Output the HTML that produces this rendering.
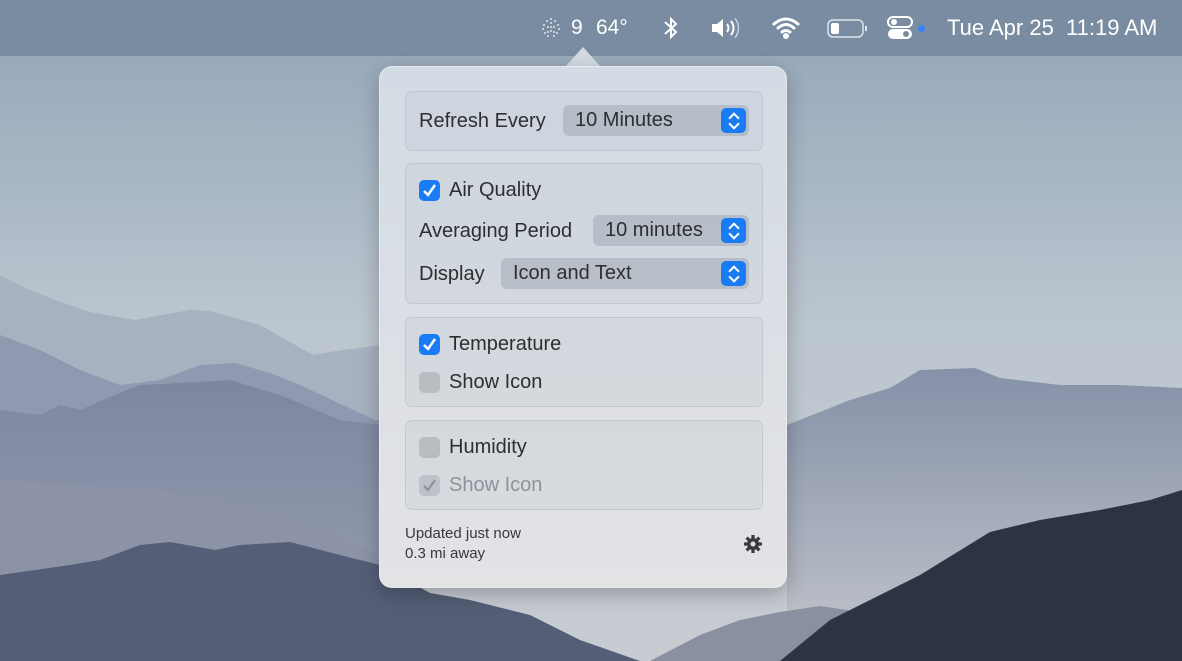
<!DOCTYPE html>
<html><head><meta charset="utf-8"><style>
*{margin:0;padding:0;box-sizing:border-box}
body{width:1182px;height:661px;overflow:hidden;position:relative;font-family:"Liberation Sans",sans-serif;background:#a9b6c4}
#bg{position:absolute;left:0;top:0}
#menubar{position:absolute;left:0;top:0;width:1182px;height:56px;background:#798ca1;color:#fff;font-size:21px}
#menubar span{position:absolute;top:16px}
#pop{position:absolute;left:379px;top:66px;width:408px;height:522px;border-radius:13px;background:linear-gradient(#d3dbe4,#e3e3e6);box-shadow:0 6px 20px rgba(0,0,0,.25);border:1px solid rgba(255,255,255,.4)}
#arrow{position:absolute;left:565px;top:47px;width:0;height:0;border-left:18px solid transparent;border-right:18px solid transparent;border-bottom:20px solid #d3dbe4}
.box{position:absolute;left:25px;width:358px;background:rgba(180,190,200,.22);border:1px solid rgba(170,178,188,.45);border-radius:7px}
.t{position:absolute;font-size:20px;color:#2e2e30}
.sel{position:absolute;height:31px;border-radius:6px;background:rgba(150,160,172,.45);font-size:20px;color:#2e2e30;padding:4px 0 0 12px}
.sel i{position:absolute;right:3px;top:3px;width:25px;height:25px;border-radius:5px;background:#1a7cf5}
.sel i:before,.sel i:after{content:"";position:absolute;left:9px;width:6px;height:6px;border:solid #fff;border-width:2px 0 0 2px}
.sel i:before{top:6px;transform:rotate(45deg)}
.sel i:after{top:12px;transform:rotate(225deg)}
.cb{position:absolute;width:21px;height:21px;border-radius:5px;background:#1a7cf5}
.cb.off{background:rgba(160,165,172,.55)}
.cb.dis{background:rgba(160,165,172,.45)}
.cb svg{position:absolute;left:2px;top:2px}
</style></head><body>
<svg id="bg" width="1182" height="661" viewBox="0 0 1182 661">
<defs>
<linearGradient id="sky" x1="0" y1="0" x2="0" y2="1"><stop offset="0" stop-color="#92a4b7"/><stop offset=".5" stop-color="#bcc6cf"/><stop offset="1" stop-color="#c8ccd2"/></linearGradient>
<linearGradient id="rh" x1="0" y1="0" x2="0" y2="1"><stop offset="0" stop-color="#8591a8"/><stop offset="1" stop-color="#c3c6cc"/></linearGradient>
<linearGradient id="lh" x1="0" y1="0" x2="0" y2="1"><stop offset="0" stop-color="#7c87a0"/><stop offset="1" stop-color="#9aa0b0"/></linearGradient>
</defs>
<rect width="1182" height="661" fill="url(#sky)"/>
<path d="M0 275 L30 290 L55 300 L90 312 L135 320 L190 310 L210 311 L260 325 L313 355 L330 352 L380 345 L380 661 L0 661Z" fill="#a8b1c0"/>
<path d="M0 335 L40 350 L80 370 L120 385 L160 380 L200 365 L235 363 L270 373 L300 385 L375 420 L380 420 L380 661 L0 661Z" fill="#8f9ab0"/>
<path d="M0 410 L40 415 L60 405 L80 410 L115 395 L140 385 L180 383 L230 380 L280 395 L340 420 L380 425 L380 661 L0 661Z" fill="url(#lh)"/>
<path d="M0 480 L150 490 L200 495 L300 520 L380 555 L380 661 L0 661Z" fill="#8c93a6"/>
<path d="M0 575 L70 565 L100 560 L140 545 L170 542 L215 550 L240 545 L290 542 L340 555 L380 565 L430 593 L470 600 L530 615 L580 640 L640 661 L0 661Z" fill="#545e76"/>
<path d="M787 425 L850 400 L890 388 L920 370 L975 368 L1000 378 L1060 385 L1120 385 L1182 388 L1182 661 L787 661Z" fill="url(#rh)"/>
<path d="M650 661 L700 635 L740 620 L780 612 L820 606 L860 612 L900 630 L900 661Z" fill="#8a90a0"/>
<path d="M780 661 L830 620 L870 600 L920 575 L990 532 L1040 520 L1100 510 L1150 500 L1182 490 L1182 661Z" fill="#2c3444"/>
</svg>
<div id="menubar">
<svg style="position:absolute;left:540px;top:17px" width="22" height="22" viewBox="0 0 22 22" fill="#dfe5ec"><g>
<circle cx="11" cy="2" r="1"/><circle cx="7" cy="4" r="1"/><circle cx="15" cy="4" r="1"/><circle cx="4" cy="8" r="1"/><circle cx="18" cy="8" r="1"/><circle cx="3" cy="12" r="1"/><circle cx="19" cy="12" r="1"/><circle cx="5" cy="16" r="1"/><circle cx="17" cy="16" r="1"/><circle cx="8" cy="19" r="1"/><circle cx="14" cy="19" r="1"/><circle cx="11" cy="6" r="1"/><circle cx="8" cy="10" r="1"/><circle cx="14" cy="10" r="1"/><circle cx="11" cy="14" r="1"/><circle cx="8" cy="15" r="1"/><circle cx="14" cy="15" r="1"/><circle cx="11" cy="10" r="1"/></g></svg>
<span style="left:571px">9</span><span style="left:596px">64°</span>
<svg style="position:absolute;left:662px;top:15px" width="18" height="26" viewBox="0 0 18 26" fill="none" stroke="#fff" stroke-width="2"><path d="M3 7 L14 17 L9 22 V4 L14 9 L3 19"/></svg>
<svg style="position:absolute;left:710px;top:16px" width="34" height="24" viewBox="0 0 34 24"><path d="M2 8 H7 L13 3 V21 L7 16 H2Z" fill="#fff"/><path d="M17 8 Q20 12 17 16" stroke="#fff" stroke-width="2" fill="none"/><path d="M21 5 Q26 12 21 19" stroke="#fff" stroke-width="2" fill="none"/><path d="M25 2 Q32 12 25 22" stroke="#c8d0da" stroke-width="1.5" fill="none"/></svg>
<svg style="position:absolute;left:772px;top:17px" width="28" height="22" viewBox="0 0 28 22" fill="none" stroke="#fff" stroke-width="3" stroke-linecap="round"><path d="M2 7 Q14 -3 26 7"/><path d="M6 11 Q14 4 22 11"/><path d="M10 15 Q14 12 18 15"/><circle cx="14" cy="19" r="1.5" fill="#fff"/></svg>
<svg style="position:absolute;left:827px;top:18px" width="42" height="22" viewBox="0 0 42 22"><rect x="1" y="2" width="35" height="17" rx="5" fill="none" stroke="#dfe5ec" stroke-width="1.5"/><rect x="4" y="5" width="8" height="11" rx="2" fill="#fff"/><rect x="38" y="8" width="2" height="5" fill="#dfe5ec"/></svg>
<svg style="position:absolute;left:887px;top:16px" width="28" height="24" viewBox="0 0 28 24"><rect x="1" y="1" width="24" height="10" rx="5" fill="none" stroke="#fff" stroke-width="2"/><circle cx="7" cy="6" r="3" fill="#fff"/><rect x="1" y="13" width="24" height="10" rx="5" fill="#fff"/><circle cx="19" cy="18" r="3" fill="#798ca1"/></svg>
<div style="position:absolute;left:918px;top:25px;width:7px;height:7px;border-radius:50%;background:#3b82f6"></div>
<span style="left:947px;font-size:22px;top:15px">Tue Apr 25&nbsp;&nbsp;11:19 AM</span>
</div>
<div id="arrow"></div>
<div id="pop">
<div class="box" style="top:24px;height:60px"><span class="t" style="left:13px;top:18px">Refresh Every</span><div class="sel" style="left:157px;top:13px;width:186px">10 Minutes<i></i></div></div>
<div class="box" style="top:96px;height:141px">
<div class="cb" style="left:13px;top:16px"><svg width="17" height="17" viewBox="0 0 17 17"><path d="M3 9 L7 13 L14 3" stroke="#fff" stroke-width="2.5" fill="none"/></svg></div>
<span class="t" style="left:43px;top:15px">Air Quality</span>
<span class="t" style="left:13px;top:56px">Averaging Period</span><div class="sel" style="left:187px;top:51px;width:156px">10 minutes<i></i></div>
<span class="t" style="left:13px;top:99px">Display</span><div class="sel" style="left:95px;top:94px;width:248px">Icon and Text<i></i></div>
</div>
<div class="box" style="top:250px;height:90px">
<div class="cb" style="left:13px;top:16px"><svg width="17" height="17" viewBox="0 0 17 17"><path d="M3 9 L7 13 L14 3" stroke="#fff" stroke-width="2.5" fill="none"/></svg></div>
<span class="t" style="left:43px;top:15px">Temperature</span>
<div class="cb off" style="left:13px;top:54px"></div><span class="t" style="left:43px;top:53px">Show Icon</span>
</div>
<div class="box" style="top:353px;height:90px">
<div class="cb off" style="left:13px;top:16px"></div><span class="t" style="left:43px;top:15px">Humidity</span>
<div class="cb dis" style="left:13px;top:54px"><svg width="17" height="17" viewBox="0 0 17 17"><path d="M3 9 L7 13 L14 3" stroke="#8e9298" stroke-width="2.2" fill="none"/></svg></div><span class="t" style="left:43px;top:53px;color:#8e9298">Show Icon</span>
</div>
<div style="position:absolute;left:25px;top:457px;font-size:15px;color:#38383b;line-height:20px">Updated just now<br>0.3 mi away</div>
<svg style="position:absolute;left:364px;top:468px" width="18" height="18" viewBox="0 0 18 18"><g fill="#3a3a3c" transform="translate(9 9)"><circle r="6"/><rect x="-1.6" y="-9" width="3.2" height="18"/><rect x="-1.6" y="-9" width="3.2" height="18" transform="rotate(45)"/><rect x="-1.6" y="-9" width="3.2" height="18" transform="rotate(90)"/><rect x="-1.6" y="-9" width="3.2" height="18" transform="rotate(135)"/></g><circle cx="9" cy="9" r="2.5" fill="#e0e1e4"/></svg>
</div>
</body></html>
